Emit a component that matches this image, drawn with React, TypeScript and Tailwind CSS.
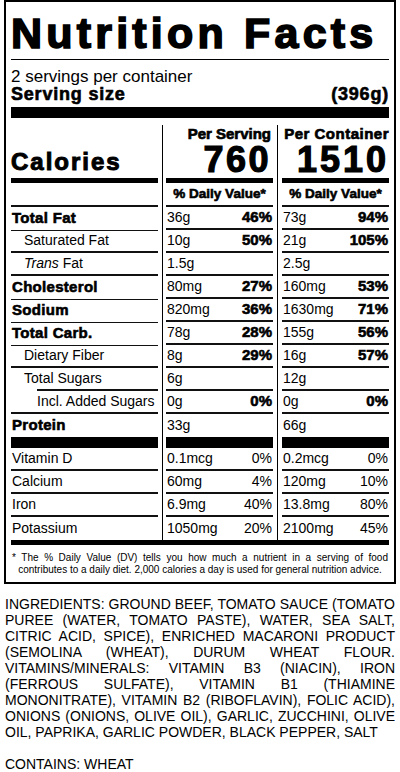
import React from 'react';

const heavy = 'font-bold [-webkit-text-stroke:0.6px_black]';
const cols = 'grid grid-cols-[147px_8px_107px_9px_107px]';

type Row = {
  label: React.ReactNode;
  indent?: number;
  bold?: boolean;
  s: string;
  sdv?: string;
  c: string;
  cdv?: string;
  subLine?: boolean;
  last?: boolean;
};

const nutrients: Row[] = [
  { label: 'Total Fat', bold: true, s: '36g', sdv: '46%', c: '73g', cdv: '94%' },
  { label: 'Saturated Fat', indent: 1, s: '10g', sdv: '50%', c: '21g', cdv: '105%' },
  { label: <span><i>Trans</i> Fat</span>, indent: 1, s: '1.5g', c: '2.5g' },
  { label: 'Cholesterol', bold: true, s: '80mg', sdv: '27%', c: '160mg', cdv: '53%' },
  { label: 'Sodium', bold: true, s: '820mg', sdv: '36%', c: '1630mg', cdv: '71%' },
  { label: 'Total Carb.', bold: true, s: '78g', sdv: '28%', c: '155g', cdv: '56%' },
  { label: 'Dietary Fiber', indent: 1, s: '8g', sdv: '29%', c: '16g', cdv: '57%' },
  { label: 'Total Sugars', indent: 1, s: '6g', c: '12g', subLine: true },
  { label: 'Incl. Added Sugars', indent: 2, s: '0g', sdv: '0%', c: '0g', cdv: '0%' },
  { label: 'Protein', bold: true, s: '33g', c: '66g', last: true },
];

const vitamins = [
  { label: 'Vitamin D', s: '0.1mcg', sdv: '0%', c: '0.2mcg', cdv: '0%' },
  { label: 'Calcium', s: '60mg', sdv: '4%', c: '120mg', cdv: '10%' },
  { label: 'Iron', s: '6.9mg', sdv: '40%', c: '13.8mg', cdv: '80%' },
  { label: 'Potassium', s: '1050mg', sdv: '20%', c: '2100mg', cdv: '45%' },
];

const ingredients = [
  'INGREDIENTS: GROUND BEEF, TOMATO SAUCE (TOMATO',
  'PUREE (WATER, TOMATO PASTE), WATER, SEA SALT,',
  'CITRIC ACID, SPICE), ENRICHED MACARONI PRODUCT',
  '(SEMOLINA (WHEAT), DURUM WHEAT FLOUR.',
  'VITAMINS/MINERALS: VITAMIN B3 (NIACIN), IRON',
  '(FERROUS SULFATE), VITAMIN B1 (THIAMINE',
  'MONONITRATE), VITAMIN B2 (RIBOFLAVIN), FOLIC ACID),',
  'ONIONS (ONIONS, OLIVE OIL), GARLIC, ZUCCHINI, OLIVE',
];

function Gap() {
  return (
    <div className="flex justify-center">
      <div className="w-px bg-black" />
    </div>
  );
}

function Amount({ v, dv, bold, last }: { v: string; dv?: string; bold?: boolean; last?: boolean }) {
  return (
    <div className={`flex justify-between items-center h-[23px] px-px ${last ? '' : 'border-b-2 border-[#111]'}`}>
      <span className="text-[14px]">{v}</span>
      {dv && <span className={bold ? `${heavy} text-[15px]` : 'text-[14px]'}>{dv}</span>}
    </div>
  );
}

export default function App() {
  return (
    <div className="bg-white text-black px-[4px] pb-4 font-['Liberation_Sans',Arial,sans-serif]">
      <div className="border-2 border-black px-[5px] pb-[6px]">
        <h1 className={`${heavy} [-webkit-text-stroke:1.6px_black] text-[43px] leading-[43px] tracking-[4.2px] pt-[10px] whitespace-nowrap`}>
          Nutrition Facts
        </h1>
        <div className="h-px bg-black mt-[4px]" />
        <div className="text-[17px] leading-[19px] mt-[7px]">2 servings per container</div>
        <div className={`${heavy} flex justify-between text-[18px] leading-[19px] tracking-[0.8px] -mt-px`}>
          <span>Serving size</span>
          <span>(396g)</span>
        </div>
        <div className="h-[11px] bg-black mt-[3px]" />

        <div className="mt-[7px]">
          <div className={cols}>
            <div className="flex items-end border-b-[5px] border-black pb-[3px]">
              <span className={`${heavy} [-webkit-text-stroke:1px_black] text-[24px] leading-[27px] tracking-[2px]`}>Calories</span>
            </div>
            <Gap />
            <div className="flex flex-col items-end border-b-[5px] border-black pb-px pr-[2px]">
              <span className={`${heavy} [-webkit-text-stroke:0.7px_black] text-[15px] leading-[17px]`}>Per Serving</span>
              <span className={`${heavy} [-webkit-text-stroke:1.2px_black] text-[36px] leading-[35px] tracking-[2.5px]`}>760</span>
            </div>
            <Gap />
            <div className="flex flex-col items-end border-b-[5px] border-black pb-px">
              <span className={`${heavy} [-webkit-text-stroke:0.7px_black] text-[15px] leading-[17px] tracking-[0.5px]`}>Per Container</span>
              <span className={`${heavy} [-webkit-text-stroke:1.2px_black] text-[36px] leading-[35px] tracking-[3px]`}>1510</span>
            </div>
          </div>

          <div className={cols}>
            <div className="h-[24px] border-b-2 border-[#111]" />
            <Gap />
            <div className={`h-[24px] border-b-2 border-[#111] flex items-center justify-center ${heavy} [-webkit-text-stroke:0.4px_black] text-[13.5px]`}>% Daily Value*</div>
            <Gap />
            <div className={`h-[24px] border-b-2 border-[#111] flex items-center justify-center ${heavy} [-webkit-text-stroke:0.4px_black] text-[13.5px]`}>% Daily Value*</div>
          </div>

          {nutrients.map((r, i) => (
            <div key={i} className={cols}>
              <div className="h-[23px] flex flex-col">
                <div
                  className={`flex-1 flex items-center ${r.bold ? `${heavy} text-[15px] tracking-[0.3px]` : 'text-[14px]'} ${
                    r.indent === 1 ? 'pl-[13px]' : r.indent === 2 ? 'pl-[26px]' : 'pl-px'
                  }`}
                >
                  {r.label}
                </div>
                {!r.last && <div className={`h-[2px] bg-[#111] ${r.subLine ? 'ml-[26px]' : ''}`} />}
              </div>
              <Gap />
              <Amount v={r.s} dv={r.sdv} bold last={r.last} />
              <Gap />
              <Amount v={r.c} dv={r.cdv} bold last={r.last} />
            </div>
          ))}

          <div className={cols}>
            <div className="h-[11px] bg-black" />
            <Gap />
            <div className="h-[11px] bg-black" />
            <Gap />
            <div className="h-[11px] bg-black" />
          </div>

          {vitamins.map((r, i) => (
            <div key={i} className={cols}>
              <div className={`h-[23px] flex items-center pl-px text-[14px] ${i < 3 ? 'border-b-2 border-[#111]' : ''}`}>{r.label}</div>
              <Gap />
              <Amount v={r.s} dv={r.sdv} last={i === 3} />
              <Gap />
              <Amount v={r.c} dv={r.cdv} last={i === 3} />
            </div>
          ))}
        </div>

        <div className="h-[5px] bg-black" />
        <div className="text-[10px] leading-[12px] pt-[7px] px-px">
          <div className="text-justify [text-align-last:justify]">
            * The % Daily Value (DV) tells you how much a nutrient in a serving of food
          </div>
          <div className="text-center">
            contributes to a daily diet. 2,000 calories a day is used for general nutrition advice.
          </div>
        </div>
      </div>

      <div className="mt-[12px] text-[14px] leading-[16px] px-px">
        {ingredients.map((l, i) => (
          <div key={i} className="text-justify [text-align-last:justify] whitespace-nowrap">
            {l}
          </div>
        ))}
        <div>OIL, PAPRIKA, GARLIC POWDER, BLACK PEPPER, SALT</div>
        <div className="mt-[16px]">CONTAINS: WHEAT</div>
      </div>
    </div>
  );
}
